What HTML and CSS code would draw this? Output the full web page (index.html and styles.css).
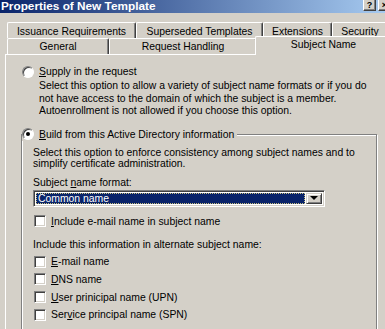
FILE: index.html
```html
<!DOCTYPE html>
<html lang="en">
<head>
    <meta charset="UTF-8">
    <title>Properties of New Template</title>
    <link rel="stylesheet" href="styles.css">
</head>
<body>
    <div class="titlebar">
        <span class="title">Properties of New Template</span>
        <div class="caption-buttons">
            <span class="cap-btn">?</span>
            <span class="cap-btn">&#215;</span>
        </div>
    </div>

    <div class="tabs">
        <div class="tab-row">
            <div class="tab back w-issuance">Issuance Requirements</div>
            <div class="tab back w-superseded">Superseded Templates</div>
            <div class="tab back w-extensions">Extensions</div>
            <div class="tab back w-security">Security</div>
        </div>
        <div class="tab-row">
            <div class="tab w-general">General</div>
            <div class="tab w-request">Request Handling</div>
            <div class="tab selected">Subject Name</div>
        </div>
    </div>

    <div class="panel">
        <div class="option">
            <label class="radio-line"><span class="radio"></span><span><u>S</u>upply in the request</span></label>
            <p class="desc">Select this option to allow a variety of subject name formats or if you do not have access to the domain of which the subject is a member. Autoenrollment is not allowed if you choose this option.</p>
        </div>

        <fieldset class="group">
            <legend class="radio-line"><span class="radio checked"></span><span><u>B</u>uild from this Active Directory information</span></legend>
            <p class="group-desc">Select this option to enforce consistency among subject names and to simplify certificate administration.</p>
            <div class="field-label">Subject <u>n</u>ame format:</div>
            <div class="combo">
                <div class="combo-value">Common name</div>
                <div class="combo-btn"><span class="arrow"></span></div>
            </div>
            <label class="check first"><span class="box"></span><span><u>I</u>nclude e-mail name in subject name</span></label>
            <div class="alt-label">Include this information in alternate subject name:</div>
            <label class="check"><span class="box"></span><span><u>E</u>-mail name</span></label>
            <label class="check"><span class="box"></span><span><u>D</u>NS name</span></label>
            <label class="check"><span class="box"></span><span><u>U</u>ser prinicipal name (UPN)</span></label>
            <label class="check"><span class="box"></span><span>Ser<u>v</u>ice principal name (SPN)</span></label>
        </fieldset>
    </div>
</body>
</html>
```

FILE: styles.css
```css
* {
    box-sizing: border-box;
    margin: 0;
    padding: 0;
}

body {
    width: 385px;
    height: 329px;
    overflow: hidden;
    background-color: #d4d0c8;
    color: #000;
    font-family: "Liberation Sans", Arial, sans-serif;
    font-size: 10.4px;
}

u {
    text-decoration-thickness: 1px;
    text-underline-offset: 1px;
}

/* title bar */
.titlebar {
    display: flex;
    justify-content: space-between;
    align-items: flex-start;
    height: 13px;
    padding-left: 1px;
    background: linear-gradient(to right, #0a246a, #a6caf0);
    color: #fff;
    font-weight: bold;
    font-size: 11.8px;
    line-height: 12px;
}

.caption-buttons {
    display: flex;
    gap: 2px;
    margin-right: -6px;
}

.cap-btn {
    width: 13px;
    height: 11px;
    background-color: #d4d0c8;
    border-left: 1px solid #fff;
    border-right: 1px solid #404040;
    border-bottom: 1px solid #404040;
    box-shadow: inset -1px -1px #808080;
    color: #000;
    font-size: 9px;
    line-height: 10px;
    text-align: center;
}

/* tabs */
.tabs {
    padding: 9px 0 0 7px;
}

.tab-row {
    display: flex;
    height: 16px;
}

.tab {
    flex: none;
    height: 16px;
    border-top: 1px solid #fff;
    border-left: 1px solid #fff;
    border-right: 1px solid #404040;
    border-radius: 2px 2px 0 0;
    box-shadow: inset -1px 0 #808080;
    background-color: #d4d0c8;
    line-height: 15px;
    text-align: center;
    white-space: nowrap;
}

.tab.back {
    padding-top: 1px;
}

.w-issuance { width: 129px; }
.w-superseded { width: 127px; }
.w-extensions { width: 69px; }
.w-security { width: 56px; }
.w-general { width: 102px; }
.w-request { width: 148px; }

.tab.selected {
    position: relative;
    z-index: 1;
    width: 137px;
    height: 19px;
    margin: -2px 0 0 -2px;
}

/* page body */
.panel {
    height: 275px;
    margin-left: 5px;
    padding: 10px 0 0 15px;
    border-top: 1px solid #fff;
    border-left: 1px solid #fff;
}

.radio-line {
    display: flex;
    align-items: center;
    gap: 5px;
    line-height: 13px;
}

.option .radio-line {
    margin-left: 1px;
}

.radio {
    flex: none;
    display: grid;
    place-items: center;
    width: 12px;
    height: 12px;
    border: 1px solid;
    border-color: #808080 #fff #fff #808080;
    border-radius: 50%;
    background-color: #fff;
    box-shadow: inset 1px 1px #404040;
}

.radio.checked::after {
    content: "";
    width: 4px;
    height: 4px;
    border-radius: 50%;
    background-color: #000;
}

.desc {
    width: 336px;
    margin: 2px 0 0 18px;
    line-height: 12.5px;
}

.group {
    width: 356px;
    min-width: 0;
    margin-top: 10px;
    padding: 6px 0 20px 11px;
    border: 1px solid #808080;
    box-shadow: inset 1px 1px #fff, 1px 1px #fff;
}

.group legend {
    margin-left: -11px;
    padding-right: 3px;
    background-color: #d4d0c8;
}

.group-desc {
    width: 340px;
    line-height: 11.5px;
}

.field-label {
    margin-top: 7px;
    line-height: 12px;
}

.combo {
    display: flex;
    width: 292px;
    height: 17px;
    margin-top: 1px;
    padding: 2px;
    border: 1px solid;
    border-color: #808080 #fff #fff #808080;
    background-color: #fff;
    box-shadow: inset 1px 1px #404040, inset -1px -1px #d4d0c8;
}

.combo-value {
    flex: 1;
    padding-left: 2px;
    background-color: #0a246a;
    color: #fff;
    outline: 1px dotted #c8c080;
    outline-offset: -1px;
    line-height: 11px;
}

.combo-btn {
    flex: none;
    display: grid;
    place-items: center;
    width: 16px;
    margin-left: 1px;
    border: 1px solid;
    border-color: #d4d0c8 #404040 #404040 #d4d0c8;
    background-color: #d4d0c8;
    box-shadow: inset 1px 1px #fff, inset -1px -1px #808080;
}

.arrow {
    width: 0;
    height: 0;
    border-left: 4px solid transparent;
    border-right: 4px solid transparent;
    border-top: 4px solid #000;
}

.check {
    display: flex;
    align-items: center;
    gap: 5px;
    height: 17.6px;
    margin-left: 1px;
}

.check.first {
    margin-top: 6px;
}

.box {
    flex: none;
    width: 12px;
    height: 12px;
    border: 1px solid;
    border-color: #808080 #fff #fff #808080;
    background-color: #fff;
    box-shadow: inset 1px 1px #404040, inset -1px -1px #d4d0c8;
}

.alt-label {
    margin: 9px 0 2px;
    line-height: 12px;
}
```
